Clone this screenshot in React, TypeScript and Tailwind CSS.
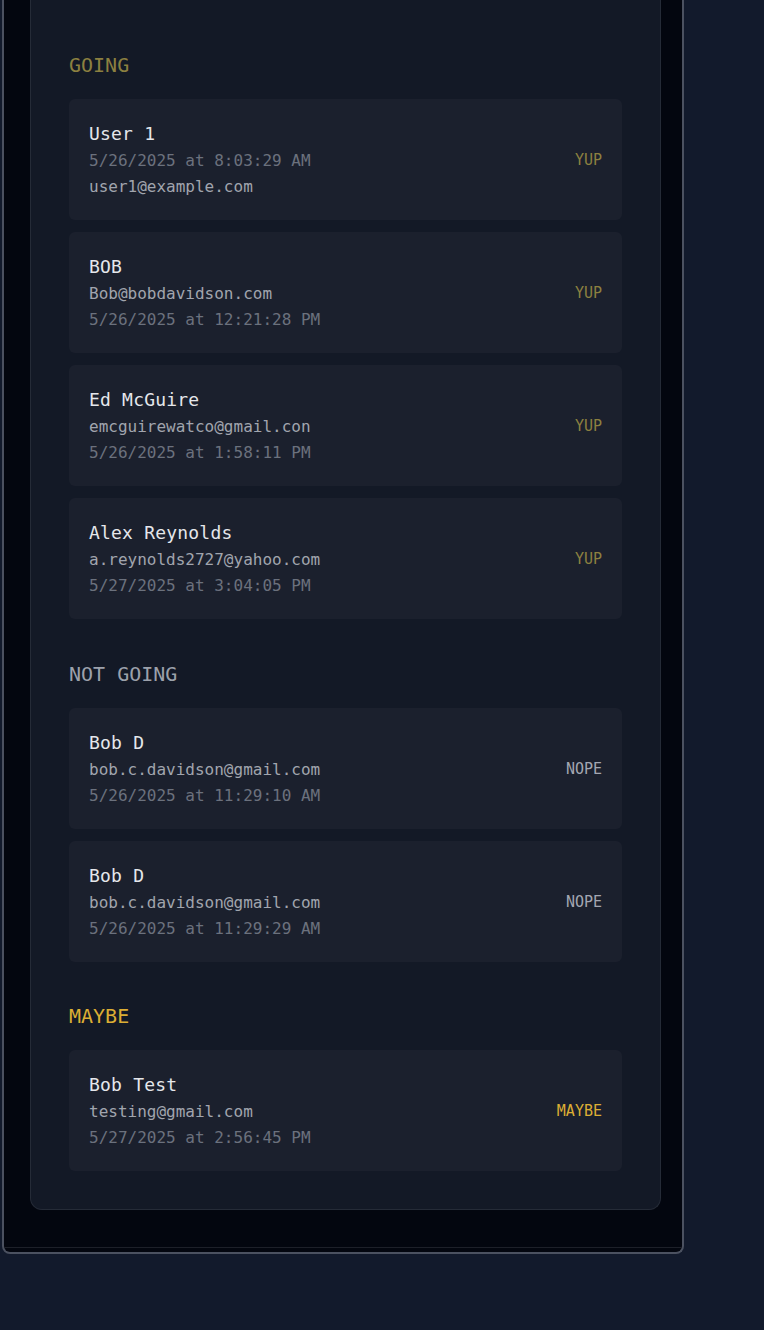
type Rsvp = {
  name: string;
  lines: { text: string; kind: "email" | "date" }[];
};

const mono = "font-['DejaVu_Sans_Mono','Liberation_Mono',monospace]";

const going: Rsvp[] = [
  {
    name: "User 1",
    lines: [
      { text: "5/26/2025 at 8:03:29 AM", kind: "date" },
      { text: "user1@example.com", kind: "email" },
    ],
  },
  {
    name: "BOB",
    lines: [
      { text: "Bob@bobdavidson.com", kind: "email" },
      { text: "5/26/2025 at 12:21:28 PM", kind: "date" },
    ],
  },
  {
    name: "Ed McGuire",
    lines: [
      { text: "emcguirewatco@gmail.con", kind: "email" },
      { text: "5/26/2025 at 1:58:11 PM", kind: "date" },
    ],
  },
  {
    name: "Alex Reynolds",
    lines: [
      { text: "a.reynolds2727@yahoo.com", kind: "email" },
      { text: "5/27/2025 at 3:04:05 PM", kind: "date" },
    ],
  },
];

const notGoing: Rsvp[] = [
  {
    name: "Bob D",
    lines: [
      { text: "bob.c.davidson@gmail.com", kind: "email" },
      { text: "5/26/2025 at 11:29:10 AM", kind: "date" },
    ],
  },
  {
    name: "Bob D",
    lines: [
      { text: "bob.c.davidson@gmail.com", kind: "email" },
      { text: "5/26/2025 at 11:29:29 AM", kind: "date" },
    ],
  },
];

const maybe: Rsvp[] = [
  {
    name: "Bob Test",
    lines: [
      { text: "testing@gmail.com", kind: "email" },
      { text: "5/27/2025 at 2:56:45 PM", kind: "date" },
    ],
  },
];

function RsvpCard({ rsvp, label, labelClass }: { rsvp: Rsvp; label: string; labelClass: string }) {
  return (
    <div className="flex items-center justify-between rounded-md bg-[#1b202d] px-5 pb-5 pt-[21px]">
      <div className="flex flex-col">
        <span className="text-lg leading-7 tracking-[0.2px] text-[#e5e7eb]">{rsvp.name}</span>
        {rsvp.lines.map((l, i) => (
          <span
            key={i}
            className={`text-base leading-[26px] ${l.kind === "email" ? "text-[#a1a5ae]" : "text-[#6b717d]"}`}
          >
            {l.text}
          </span>
        ))}
      </div>
      <span className={`text-[15px] leading-5 ${labelClass}`}>{label}</span>
    </div>
  );
}

function Section({
  title,
  titleClass,
  items,
  label,
  labelClass,
  className = "",
}: {
  title: string;
  titleClass: string;
  items: Rsvp[];
  label: string;
  labelClass: string;
  className?: string;
}) {
  return (
    <section className={`flex flex-col ${className}`}>
      <h2 className={`mb-5 text-xl leading-7 ${titleClass}`}>{title}</h2>
      <div className="flex flex-col gap-3">
        {items.map((r, i) => (
          <RsvpCard key={i} rsvp={r} label={label} labelClass={labelClass} />
        ))}
      </div>
    </section>
  );
}

export default function App() {
  return (
    <div className={`min-h-[1330px] bg-[#121a2c] ${mono}`}>
      {/* device frame */}
      <div className="ml-[2px] w-[682px] rounded-b-lg border-x-2 border-b-2 border-[#4b5160] bg-[#03060f] pb-1">
        <div className="border-b border-[#1d2029] pb-[37px] pl-[26px] pr-[21px]">
          <div className="flex flex-col rounded-b-xl border-x border-b border-[#252b37] bg-[#131926] px-[38px] pb-[38px] pt-[51px]">
            <Section
              title="GOING"
              titleClass="text-[#8c8040]"
              items={going}
              label="YUP"
              labelClass="text-[#8c8040]"
            />
            <Section
              className="mt-[41px]"
              title="NOT GOING"
              titleClass="text-[#9ca1ab]"
              items={notGoing}
              label="NOPE"
              labelClass="text-[#a3a7b1]"
            />
            <Section
              className="mt-[40px]"
              title="MAYBE"
              titleClass="text-[#dcae34]"
              items={maybe}
              label="MAYBE"
              labelClass="text-[#dcae34]"
            />
          </div>
        </div>
      </div>
    </div>
  );
}
